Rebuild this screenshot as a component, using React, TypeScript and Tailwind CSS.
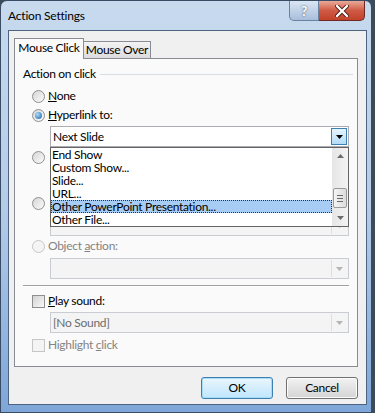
import React from "react";

const ui = "font-['Lato','Liberation_Sans',sans-serif] text-[12px] leading-[14px] tracking-[-0.3px] text-black";

function Radio({ checked, disabled }: { checked?: boolean; disabled?: boolean }) {
    return (
        <span
            className={`flex h-[13px] w-[13px] shrink-0 items-center justify-center rounded-full border ${
                disabled
                    ? "border-[#c6c6c6] bg-[#f4f4f4]"
                    : "border-[#8e8f8f] bg-linear-to-br from-[#d6d6d6] to-[#fbfbfb]"
            }`}
        >
            {checked && (
                <span className="h-[7px] w-[7px] rounded-full bg-[radial-gradient(circle_at_35%_35%,#a6dcfb,#1b5ea8)]" />
            )}
        </span>
    );
}

function Check({ disabled }: { disabled?: boolean }) {
    return (
        <span
            className={`h-[13px] w-[13px] shrink-0 border ${
                disabled
                    ? "border-[#c6c6c6] bg-[#f4f4f4]"
                    : "border-[#8e8f8f] bg-linear-to-br from-[#d3d3d3] to-[#f8f8f8]"
            }`}
        />
    );
}

function Arrow({ color }: { color: string }) {
    return (
        <svg width="7" height="4" viewBox="0 0 7 4">
            <path d="M0 0h7L3.5 4z" fill={color} />
        </svg>
    );
}

function Combo({ text, disabled, hot }: { text?: string; disabled?: boolean; hot?: boolean }) {
    return (
        <div
            className={`flex h-[21px] w-[299px] items-center border ${
                disabled ? "border-[#c9ccd0] bg-[#f4f4f4]" : "border-[#abadb3] bg-white"
            }`}
        >
            <span className={`flex-1 pl-[2px] ${disabled ? "text-[#6d6d6d]" : ""}`}>{text}</span>
            <span
                className={`mr-px flex h-[17px] w-[16px] items-center justify-center ${
                    hot
                        ? "border border-[#3c7fb1] bg-linear-to-b from-[#e6f4fd] to-[#b3dcf6]"
                        : disabled
                          ? "border-l border-[#dedede]"
                          : ""
                }`}
            >
                <Arrow color={disabled ? "#b4b4b4" : "#000"} />
            </span>
        </div>
    );
}

const listItems = ["End Show", "Custom Show...", "Slide...", "URL...", "Other PowerPoint Presentation...", "Other File..."];

function DropList() {
    return (
        <div className="absolute left-[35px] top-[88px] z-20 flex h-[80px] w-[299px] border border-[#646464] bg-white">
            <div className="flex-1">
                {listItems.map((item, i) => (
                    <div
                        key={item}
                        className={`h-[13px] overflow-hidden pl-px leading-[13px] ${
                            i === 4 ? "bg-[#a7cdf4] outline-1 -outline-offset-1 outline-dotted outline-[#333]" : ""
                        }`}
                    >
                        {item}
                    </div>
                ))}
            </div>
            <div className="flex w-[16px] flex-col items-center bg-linear-to-r from-[#e6e6e6] to-[#f3f3f3]">
                <div className="flex h-[16px] items-center">
                    <svg width="7" height="4" viewBox="0 0 7 4">
                        <path d="M0 4h7L3.5 0z" fill="#6c6c6c" />
                    </svg>
                </div>
                <div className="flex-1" />
                <div className="mb-[2px] flex h-[20px] w-[14px] flex-col items-center justify-center gap-[2px] rounded-[2px] border border-[#9a9a9a] bg-linear-to-r from-[#f5f5f5] to-[#dcdcdc]">
                    <span className="h-px w-[6px] bg-[#6a6a6a]" />
                    <span className="h-px w-[6px] bg-[#6a6a6a]" />
                    <span className="h-px w-[6px] bg-[#6a6a6a]" />
                </div>
                <div className="flex h-[16px] items-center">
                    <Arrow color="#6c6c6c" />
                </div>
            </div>
        </div>
    );
}

function Button({ label, focused }: { label: string; focused?: boolean }) {
    return (
        <div
            className={`flex h-[22px] w-[72px] items-center justify-center rounded-[3px] border ${
                focused
                    ? "border-[#3c7fb1] bg-linear-to-b from-[#eaf6fd] to-[#bee6fd] shadow-[inset_0_0_0_1px_#a9dbf6]"
                    : "border-[#707070] bg-linear-to-b from-[#f2f2f2] to-[#d4d4d4] shadow-[inset_0_0_0_1px_#fcfcfc]"
            }`}
        >
            {label}
        </div>
    );
}

export default function App() {
    return (
        <div className={`h-[413px] w-[375px] overflow-hidden bg-[#3d4a58] ${ui}`}>
            <div className="flex h-[413px] w-[372px] flex-col rounded-t-[7px] border border-[#3a4c63] bg-linear-to-b from-[#c7daee] via-[#b5cce8] to-[#7ea6d8]">
                {/* title bar */}
                <div className="flex h-[29px] items-start justify-between pl-[7px] pr-[6px]">
                    <span className="mt-[8px] tracking-[-0.2px]">Action Settings</span>
                    <div className="flex">
                        <div className="flex h-[20px] w-[30px] items-center justify-center rounded-bl-[5px] border border-t-0 border-[#6a819f] bg-linear-to-b from-[#dae6f3] to-[#a8bedb] text-[13px] font-bold text-white [text-shadow:0_0_2px_#34465c]">
                            ?
                        </div>
                        <div className="flex h-[20px] w-[46px] items-center justify-center rounded-br-[5px] border border-l-0 border-t-0 border-[#6e2a22] bg-linear-to-b from-[#e8a999] via-[#cf5a44] to-[#c1412a]">
                            <svg width="14" height="12" viewBox="0 0 14 12">
                                <path d="M2 1l10 10M12 1L2 11" stroke="#4a1a12" strokeWidth="4" strokeLinecap="round" />
                                <path d="M2 1l10 10M12 1L2 11" stroke="#fff" strokeWidth="2.4" strokeLinecap="round" />
                            </svg>
                        </div>
                    </div>
                </div>

                {/* client area */}
                <div className="ml-[7px] h-[375px] w-[359px] border border-[#4d6480] bg-[#f0f0f0]">
                    {/* tabs */}
                    <div className="relative z-10 ml-[5px] mt-[7px] -mb-px flex h-[21px] items-end">
                        <div className="flex h-[21px] w-[70px] items-center justify-center border border-b-0 border-[#898c95] bg-[#fafafa] pb-[2px]">
                            Mouse Click
                        </div>
                        <div className="flex h-[18px] w-[67px] items-center justify-center border border-l-0 border-[#898c95] bg-linear-to-b from-[#f3f3f3] to-[#dcdcdc]">
                            Mouse Over
                        </div>
                    </div>

                    {/* panel */}
                    <div className="relative ml-[5px] flex h-[309px] w-[344px] flex-col border border-[#898c95] bg-[#fafafa]">
                        <div className="ml-[8px] mt-[8px] flex h-[14px] items-center">
                            <span>Action on click</span>
                            <span className="ml-[4px] mr-[4px] h-px flex-1 bg-[#d5dfe5]" />
                        </div>

                        <div className="ml-[17px] mt-[8px] flex h-[14px] items-center gap-[3px]">
                            <Radio />
                            <span>
                                <u>N</u>one
                            </span>
                        </div>
                        <div className="ml-[17px] mt-[5px] flex h-[14px] items-center gap-[3px]">
                            <Radio checked />
                            <span>
                                <u>H</u>yperlink to:
                            </span>
                        </div>
                        <div className="ml-[35px] mt-[4px]">
                            <Combo text="Next Slide" hot />
                        </div>

                        {/* run program row, hidden under the open list */}
                        <div className="ml-[17px] mt-[3px] flex h-[14px] items-center">
                            <Radio />
                        </div>
                        <div className="ml-[35px] mt-[3px] h-[21px]" />

                        {/* run macro row */}
                        <div className="ml-[17px] mt-[8px] flex h-[14px] items-center">
                            <Radio />
                        </div>
                        <div className="ml-[35px] mt-[5px]">
                            <Combo disabled />
                        </div>

                        <div className="ml-[17px] mt-[3px] flex h-[14px] items-center gap-[3px] text-[#838383]">
                            <Radio disabled />
                            <span>
                                Object <u>a</u>ction:
                            </span>
                        </div>
                        <div className="ml-[35px] mt-[5px]">
                            <Combo disabled />
                        </div>

                        <div className="ml-[8px] mt-[6px] h-px w-[326px] bg-[#a0a0a0] shadow-[0_1px_0_#fff]" />

                        <div className="ml-[17px] mt-[8px] flex h-[14px] items-center gap-[3px]">
                            <Check />
                            <span>
                                <u>P</u>lay sound:
                            </span>
                        </div>
                        <div className="ml-[35px] mt-[4px]">
                            <Combo text="[No Sound]" disabled />
                        </div>
                        <div className="ml-[17px] mt-[5px] flex h-[14px] items-center gap-[3px] text-[#838383]">
                            <Check disabled />
                            <span>
                                Highlight <u>c</u>lick
                            </span>
                        </div>

                        <DropList />
                    </div>

                    {/* buttons */}
                    <div className="ml-[5px] mt-[10px] flex w-[344px] justify-end gap-[13px]">
                        <Button label="OK" focused />
                        <Button label="Cancel" />
                    </div>
                </div>
            </div>
        </div>
    );
}
